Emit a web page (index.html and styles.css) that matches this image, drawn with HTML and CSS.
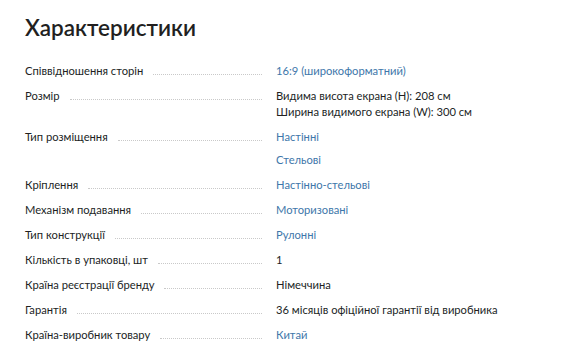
FILE: index.html
```html
<!DOCTYPE html>
<html lang="uk">
<head>
<meta charset="utf-8">
<link rel="stylesheet" href="styles.css">
</head>
<body>
<section class="specs">
  <h2 class="specs-title">Характеристики</h2>
  <dl class="specs-list">
    <div class="spec-row">
      <dt class="spec-label"><span>Співвідношення сторін</span></dt>
      <dd class="spec-value"><a class="spec-link" href="#">16:9 (широкоформатний)</a></dd>
    </div>
    <div class="spec-row">
      <dt class="spec-label"><span>Розмір</span></dt>
      <dd class="spec-value"><span class="spec-line">Видима висота екрана (H): 208 см</span><span class="spec-line">Ширина видимого екрана (W): 300 см</span></dd>
    </div>
    <div class="spec-row">
      <dt class="spec-label"><span>Тип розміщення</span></dt>
      <dd class="spec-value spec-value-list"><a class="spec-link" href="#">Настінні</a><a class="spec-link" href="#">Стельові</a></dd>
    </div>
    <div class="spec-row">
      <dt class="spec-label"><span>Кріплення</span></dt>
      <dd class="spec-value"><a class="spec-link" href="#">Настінно-стельові</a></dd>
    </div>
    <div class="spec-row">
      <dt class="spec-label"><span>Механізм подавання</span></dt>
      <dd class="spec-value"><a class="spec-link" href="#">Моторизовані</a></dd>
    </div>
    <div class="spec-row">
      <dt class="spec-label"><span>Тип конструкції</span></dt>
      <dd class="spec-value"><a class="spec-link" href="#">Рулонні</a></dd>
    </div>
    <div class="spec-row">
      <dt class="spec-label"><span>Кількість в упаковці, шт</span></dt>
      <dd class="spec-value">1</dd>
    </div>
    <div class="spec-row">
      <dt class="spec-label"><span>Країна реєстрації бренду</span></dt>
      <dd class="spec-value">Німеччина</dd>
    </div>
    <div class="spec-row">
      <dt class="spec-label"><span>Гарантія</span></dt>
      <dd class="spec-value">36 місяців офіційної гарантії від виробника</dd>
    </div>
    <div class="spec-row">
      <dt class="spec-label"><span>Країна-виробник товару</span></dt>
      <dd class="spec-value"><a class="spec-link" href="#">Китай</a></dd>
    </div>
  </dl>
</section>
</body>
</html>
```
FILE: styles.css
```css
html, body {
  margin: 0;
  padding: 0;
  background: #fff;
}
body {
  font-family: Lato, Roboto, "Noto Sans", sans-serif;
  color: #221f1f;
}
.specs {
  padding: 12px 25px 0 25px;
}
.specs-title {
  margin: 0 0 19px 0;
  font-size: 22.5px;
  line-height: 32px;
  font-weight: 600;
  color: #221f1f;
}
.specs-list {
  margin: 0;
  display: flex;
  flex-direction: column;
  gap: 9px;
}
.spec-row {
  display: flex;
  font-size: 11.2px;
  line-height: 16px;
}
.spec-label {
  flex: 0 0 251px;
  display: flex;
  align-items: baseline;
  margin: 0;
}
.spec-label::after {
  content: "";
  flex: 1;
  border-bottom: 1px dotted #c9c9c9;
  margin: 0 14px 0 10px;
}
.spec-value {
  margin: 0;
  display: flex;
  flex-direction: column;
}
.spec-value-list {
  gap: 7px;
}
.spec-link {
  color: #3e77aa;
  text-decoration: none;
}
```
